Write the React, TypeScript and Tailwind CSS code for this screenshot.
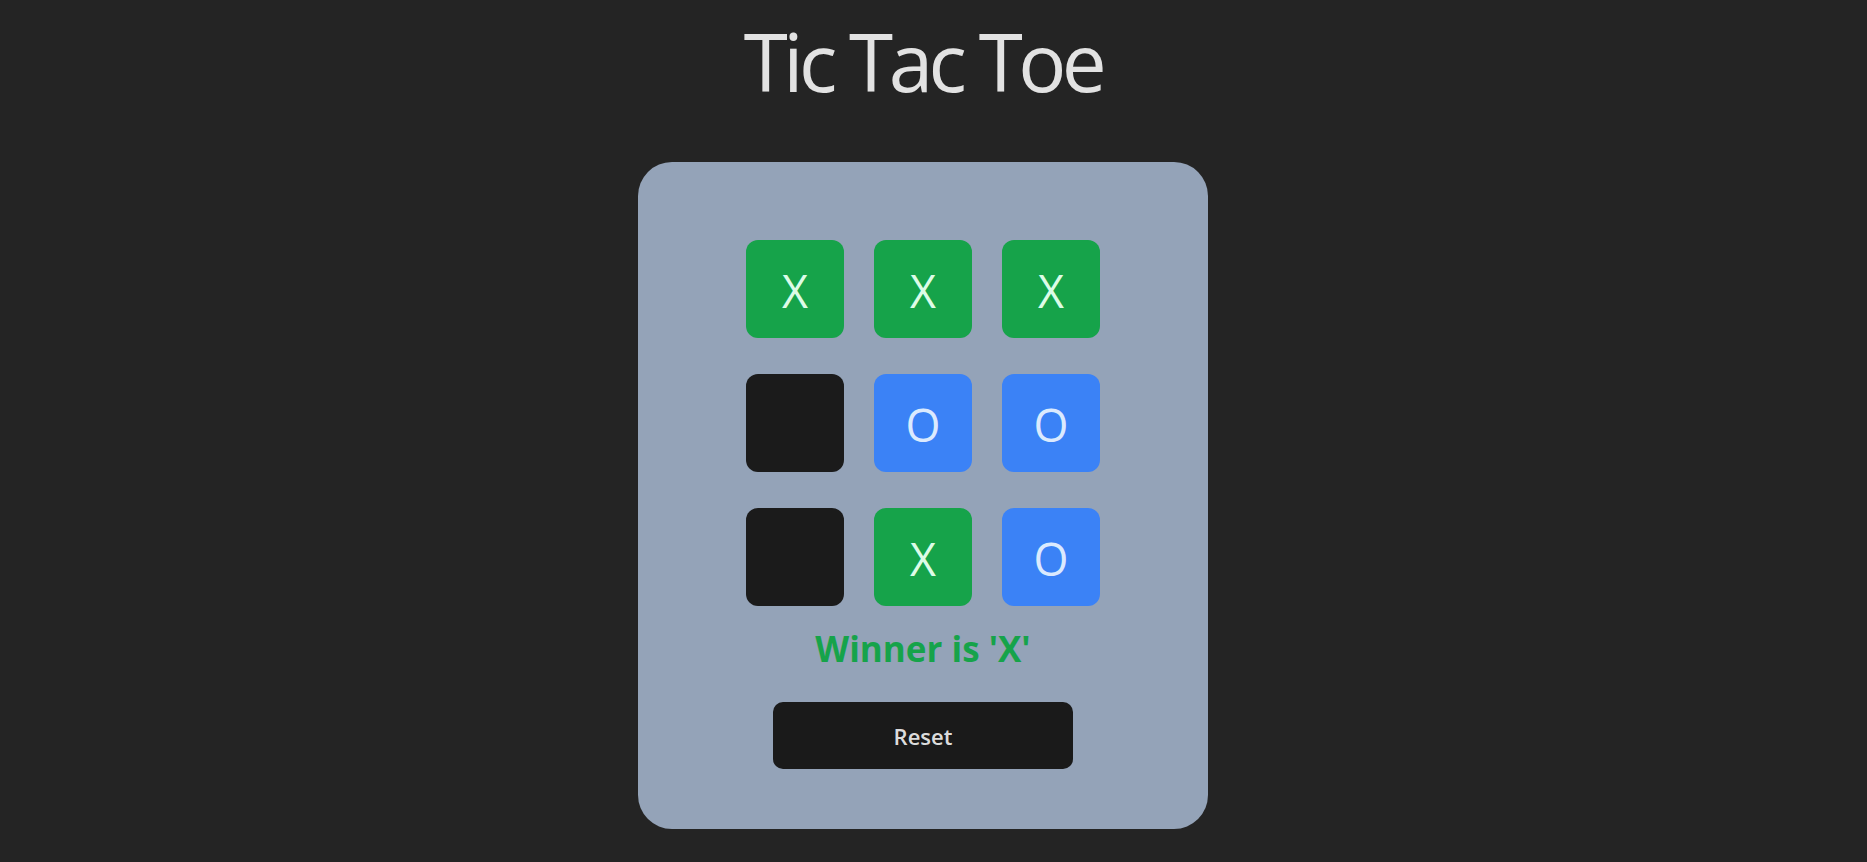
import { useState } from 'react';

type Cell = 'X' | 'O' | null;

const lines = [
  [0, 1, 2],
  [3, 4, 5],
  [6, 7, 8],
  [0, 3, 6],
  [1, 4, 7],
  [2, 5, 8],
  [0, 4, 8],
  [2, 4, 6],
];

function getWinner(board: Cell[]): Cell {
  for (const [a, b, c] of lines) {
    if (board[a] && board[a] === board[b] && board[a] === board[c]) return board[a];
  }
  return null;
}

const startBoard: Cell[] = ['X', 'X', 'X', null, 'O', 'O', null, 'X', 'O'];

export default function App() {
  const [board, setBoard] = useState<Cell[]>(startBoard);
  const [xNext, setXNext] = useState(true);
  const winner = getWinner(board);

  const handleClick = (i: number) => {
    if (board[i] || winner) return;
    const next = [...board];
    next[i] = xNext ? 'X' : 'O';
    setBoard(next);
    setXNext(!xNext);
  };

  const reset = () => {
    setBoard(Array(9).fill(null));
    setXNext(true);
  };

  return (
    <div
      className="min-h-screen bg-[#242424] pr-[21px] pt-[13px] flex flex-col items-center text-[rgba(255,255,255,0.87)]"
      style={{ fontFamily: '"Open Sans", "Noto Sans", sans-serif' }}
    >
      <h1 className="text-[80px] leading-[96px] font-normal tracking-[-4.5px]">Tic Tac Toe</h1>

      {/* Board card */}
      <div className="mt-[53px] w-[570px] rounded-[34px] bg-[#94a3b8] pt-[78px] pb-[60px] flex flex-col items-center">
        <div className="grid grid-cols-3 gap-x-[30px] gap-y-[36px]">
          {board.map((cell, i) => (
            <button
              key={i}
              onClick={() => handleClick(i)}
              className={`w-[98px] h-[98px] rounded-xl flex items-center justify-center pt-[3px] text-[45px] leading-[45px] font-medium ${
                cell === 'X'
                  ? 'bg-[#16a34a] text-[#dcfce7]'
                  : cell === 'O'
                    ? 'bg-[#3b82f6] text-[#dbeafe]'
                    : 'bg-[#1b1b1b]'
              }`}
            >
              {cell}
            </button>
          ))}
        </div>

        <p className="mt-[23px] h-10 text-[35px] leading-10 font-bold text-[#16a34a]">
          {winner ? `Winner is '${winner}'` : `Next: '${xNext ? 'X' : 'O'}'`}
        </p>

        <button
          onClick={reset}
          className="mt-[33px] w-[300px] h-[67px] rounded-[10px] bg-[#1a1a1a] text-[22px] leading-8 font-semibold text-[rgba(255,255,255,0.87)]"
        >
          Reset
        </button>
      </div>
    </div>
  );
}
